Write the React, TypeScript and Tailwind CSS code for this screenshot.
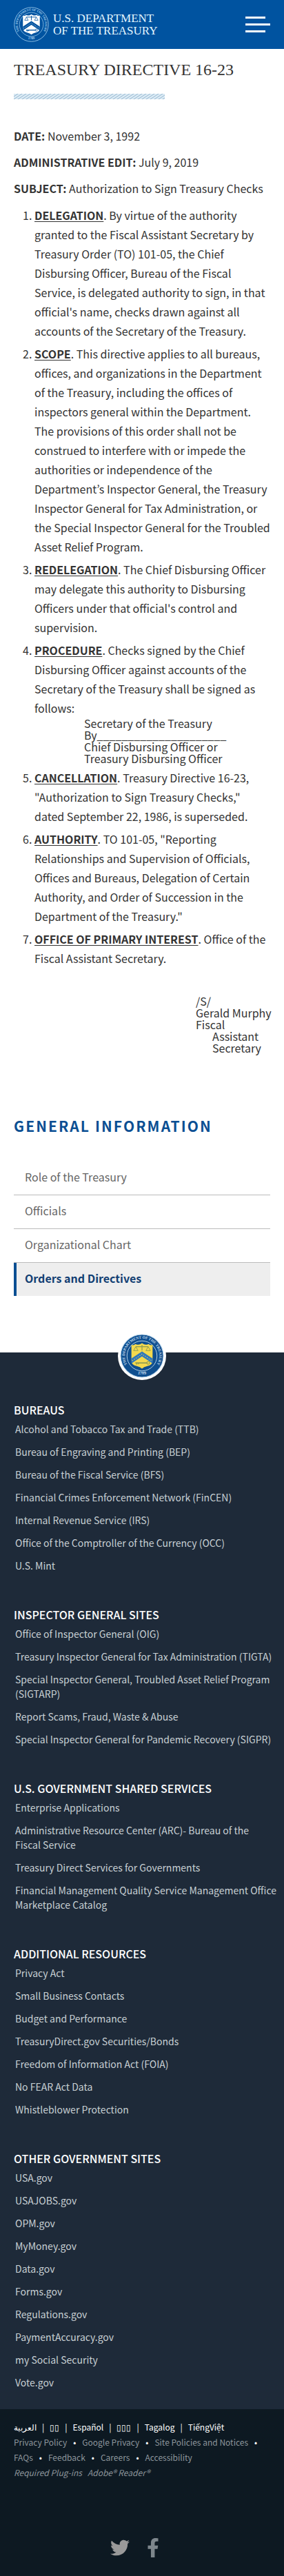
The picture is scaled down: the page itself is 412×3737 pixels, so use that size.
import { FaFacebookF, FaTwitter } from "react-icons/fa";

const sideNav = ["Role of the Treasury", "Officials", "Organizational Chart"];

const footerSections = [
  {
    title: "BUREAUS",
    links: [
      "Alcohol and Tobacco Tax and Trade (TTB)",
      "Bureau of Engraving and Printing (BEP)",
      "Bureau of the Fiscal Service (BFS)",
      "Financial Crimes Enforcement Network (FinCEN)",
      "Internal Revenue Service (IRS)",
      "Office of the Comptroller of the Currency (OCC)",
      "U.S. Mint",
    ],
  },
  {
    title: "INSPECTOR GENERAL SITES",
    links: [
      "Office of Inspector General (OIG)",
      "Treasury Inspector General for Tax Administration (TIGTA)",
      "Special Inspector General, Troubled Asset Relief Program\n(SIGTARP)",
      "Report Scams, Fraud, Waste & Abuse",
      "Special Inspector General for Pandemic Recovery (SIGPR)",
    ],
  },
  {
    title: "U.S. GOVERNMENT SHARED SERVICES",
    links: [
      "Enterprise Applications",
      "Administrative Resource Center (ARC)- Bureau of the\nFiscal Service",
      "Treasury Direct Services for Governments",
      "Financial Management Quality Service Management Office\nMarketplace Catalog",
    ],
  },
  {
    title: "ADDITIONAL RESOURCES",
    links: [
      "Privacy Act",
      "Small Business Contacts",
      "Budget and Performance",
      "TreasuryDirect.gov Securities/Bonds",
      "Freedom of Information Act (FOIA)",
      "No FEAR Act Data",
      "Whistleblower Protection",
    ],
  },
  {
    title: "OTHER GOVERNMENT SITES",
    links: [
      "USA.gov",
      "USAJOBS.gov",
      "OPM.gov",
      "MyMoney.gov",
      "Data.gov",
      "Forms.gov",
      "Regulations.gov",
      "PaymentAccuracy.gov",
      "my Social Security",
      "Vote.gov",
    ],
  },
];

const languages = ["العربية", "▯▯", "Español", "▯▯▯", "Tagalog", "TiếngViệt"];

const policies = [
  "Privacy Policy",
  "Google Privacy",
  "Site Policies and Notices",
  "FAQs",
  "Feedback",
  "Careers",
  "Accessibility",
];

type SealProps = {
  id: string;
  className: string;
  ring: string;
  line: string;
  shield: string;
  chevron: string;
  mark: string;
};

function Seal({ id, className, ring, line, shield, chevron, mark }: SealProps) {
  return (
    <svg viewBox="0 0 100 100" className={className} aria-hidden="true">
      <defs>
        <path id={id + "-top"} d="M 22.5 77.5 A 39 39 0 1 1 77.5 77.5" />
        <path id={id + "-bottom"} d="M 30 87.5 A 44 44 0 0 0 70 87.5" />
      </defs>
      <circle cx="50" cy="50" r="48.5" fill={ring} stroke={line} strokeWidth="1.6" />
      <circle cx="50" cy="50" r="34" fill="none" stroke={line} strokeWidth="1.4" />
      <text fill={line} fontSize="8.6" fontWeight="700" fontFamily="Liberation Serif, serif" textAnchor="middle">
        <textPath href={"#" + id + "-top"} startOffset="50%">
          THE DEPARTMENT OF THE TREASURY
        </textPath>
      </text>
      <text fill={line} fontSize="10" fontWeight="700" fontFamily="Liberation Serif, serif" textAnchor="middle">
        <textPath href={"#" + id + "-bottom"} startOffset="50%">
          1789
        </textPath>
      </text>
      <path
        d="M26 25 Q31 27 35 23 Q42 27 50 21 Q58 27 65 23 Q69 27 74 25 L74 60 Q74 71 62 73 Q54 75 50 79 Q46 75 38 73 Q26 71 26 60 Z"
        fill={shield}
      />
      <path d="M26 56 L50 40 L74 56 L74 67 L50 51 L26 67 Z" fill={chevron} />
      <path d="M28 61 L50 46 L72 61" fill="none" stroke={shield} strokeWidth="1.6" strokeDasharray="2 3" />
      <path d="M50 25 V38 M36 29 H64" fill="none" stroke={mark} strokeWidth="1.8" />
      <path d="M36 29 L31 38 H41 Z M64 29 L59 38 H69 Z" fill="none" stroke={mark} strokeWidth="1.4" />
      <path d="M35 66 H62" stroke={mark} strokeWidth="2.6" />
      <circle cx="64" cy="66" r="3" fill="none" stroke={mark} strokeWidth="1.6" />
      <path d="M38 66 V70 M42 66 V69" stroke={mark} strokeWidth="1.8" />
    </svg>
  );
}

function Term({ children }: { children: string }) {
  return <strong className="font-bold underline decoration-1 underline-offset-2">{children}</strong>;
}

function FooterSection({ title, links }: { title: string; links: string[] }) {
  return (
    <section>
      <h2 className="text-base leading-6 font-medium text-white">{title}</h2>
      <ul className="mt-1.5 -mr-4 space-y-3 pl-0.5">
        {links.map((link) => (
          <li key={link} className="text-sm leading-[21px] whitespace-pre-line text-[#c8d0d4]">
            <a href="#">{link}</a>
          </li>
        ))}
      </ul>
    </section>
  );
}

export default function App() {
  return (
    <div className="bg-white font-['Noto_Sans_CJK_KR','Noto_Sans',sans-serif] text-base text-[#333]">
      <header className="flex h-[71px] items-center justify-between bg-[#0053a0] px-5">
        <a href="#" className="flex items-center gap-1.5">
          <Seal
            id="brand"
            className="size-[51px]"
            ring="#0053a0"
            line="#a9d4f2"
            shield="#ffffff"
            chevron="#0053a0"
            mark="#0053a0"
          />
          <span className="font-['Liberation_Serif',serif] text-[17px] leading-[18px] text-[#e4f6ff]">
            U.S. DEPARTMENT
            <br />
            OF THE TREASURY
          </span>
        </a>
        <button type="button" aria-label="Menu" className="flex w-9 flex-col gap-[7px]">
          <span className="h-[3px] w-[29px] bg-white" />
          <span className="h-[3px] w-9 bg-white" />
          <span className="h-[3px] w-[29px] bg-white" />
        </button>
      </header>

      <main className="px-5">
        <h1 className="pt-3 font-['Liberation_Serif',serif] text-2xl leading-9 whitespace-nowrap">
          TREASURY DIRECTIVE 16-23
        </h1>
        <svg className="mt-[17px] block h-2 w-[219px]" aria-hidden="true">
          <defs>
            <pattern id="stripes" width="6" height="4" patternUnits="userSpaceOnUse">
              <rect width="6" height="4" fill="#dcebf5" />
              <path d="M-1.5 5 L7.5 -1 M-1.5 1 L1.5 -1 M4.5 5 L7.5 3" stroke="#94b6cf" strokeWidth="1" />
            </pattern>
          </defs>
          <rect width="219" height="8" fill="url(#stripes)" />
        </svg>

        <div className="space-y-[10px] pt-[39px] leading-7">
          <p>
            <strong>DATE:</strong> November 3, 1992
          </p>
          <p>
            <strong>ADMINISTRATIVE EDIT:</strong> July 9, 2019
          </p>
          <p>
            <strong>SUBJECT:</strong> Authorization to Sign Treasury Checks
          </p>
        </div>

        <ol className="list-decimal space-y-[5px] pt-[11px] pl-[30px] leading-7">
          <li>
            <Term>DELEGATION</Term>. By virtue of the authority granted to the Fiscal Assistant Secretary by
            Treasury Order (TO) 101-05, the Chief Disbursing Officer, Bureau of the Fiscal Service, is delegated
            authority to sign, in that official's name, checks drawn against all accounts of the Secretary of the
            Treasury.
          </li>
          <li>
            <Term>SCOPE</Term>. This directive applies to all bureaus, offices, and organizations in the Department
            of the Treasury, including the offices of inspectors general within the Department. The provisions of
            this order shall not be construed to interfere with or impede the authorities or independence of the
            Department’s Inspector General, the Treasury Inspector General for Tax Administration, or the Special
            Inspector General for the Troubled Asset Relief Program.
          </li>
          <li>
            <Term>REDELEGATION</Term>. The Chief Disbursing Officer may delegate this authority to Disbursing
            Officers under that official's control and supervision.
          </li>
          <li>
            <Term>PROCEDURE</Term>. Checks signed by the Chief Disbursing Officer against accounts of the Secretary
            of the Treasury shall be signed as follows:
            <p className="pl-[72px] leading-[17px]">
              Secretary of the Treasury
              <br />
              By_____________________
              <br />
              Chief Disbursing Officer or
              <br />
              Treasury Disbursing Officer
            </p>
          </li>
          <li>
            <Term>CANCELLATION</Term>. Treasury Directive 16-23, "Authorization to Sign Treasury Checks," dated
            September 22, 1986, is superseded.
          </li>
          <li>
            <Term>AUTHORITY</Term>. TO 101-05, "Reporting Relationships and Supervision of Officials, Offices and
            Bureaus, Delegation of Certain Authority, and Order of Succession in the Department of the Treasury."
          </li>
          <li>
            <Term>OFFICE OF PRIMARY INTEREST</Term>. Office of the Fiscal Assistant Secretary.
          </li>
        </ol>

        <div className="flex justify-end pt-10 leading-[17px]">
          <p className="w-[108px] whitespace-nowrap">
            /S/
            <br />
            Gerald Murphy
            <br />
            Fiscal
            <span className="block pl-6">
              Assistant
              <br />
              Secretary
            </span>
          </p>
        </div>

        <aside className="pt-[88px] pb-[82px]">
          <h2 className="text-[21px] leading-8 font-bold tracking-widest text-[#0b4f93]">GENERAL INFORMATION</h2>
          <nav className="pt-9">
            {sideNav.map((item) => (
              <a key={item} href="#" className="block border-b border-[#bbb] pt-[10px] pb-[14px] pl-4 leading-6 text-[#666]">
                {item}
              </a>
            ))}
            <a
              href="#"
              className="block border-l-4 border-[#0b4f93] bg-[#eee] pt-[10px] pb-[14px] pl-3 leading-6 font-bold text-[#123f73]"
            >
              Orders and Directives
            </a>
          </nav>
        </aside>
      </main>

      <footer>
        <div className="relative bg-[#1e2a39] px-5 pt-[71px] pb-7">
          <div className="absolute -top-[30px] left-1/2 flex size-[70px] -translate-x-1/2 items-center justify-center rounded-full bg-white">
            <Seal
              id="badge"
              className="size-[64px]"
              ring="#0f4f8f"
              line="#c3dcee"
              shield="#f3d94e"
              chevron="#2f78bd"
              mark="#8a9a52"
            />
          </div>
          <div className="space-y-12">
            {footerSections.map((section) => (
              <FooterSection key={section.title} title={section.title} links={section.links} />
            ))}
          </div>
        </div>

        <div className="bg-[#0d1922] px-5 pt-[15px] pb-[27px] text-xs leading-[22px] text-[#8c959b]">
          <ul className="flex flex-wrap text-white">
            {languages.map((language, index) => (
              <li key={language} className="flex">
                {index > 0 && <span className="px-2">|</span>}
                <a href="#">{language}</a>
              </li>
            ))}
          </ul>
          <ul className="flex flex-wrap">
            {policies.map((policy, index) => (
              <li key={policy} className="flex">
                <a href="#">{policy}</a>
                {index < policies.length - 1 && <span className="px-[9px] text-white">•</span>}
              </li>
            ))}
          </ul>
          <p className="flex gap-2 italic">
            <span>Required Plug-ins</span>
            <a href="#">Adobe® Reader®</a>
          </p>
          <div className="flex justify-center gap-5 pt-[84px] pr-4">
            <a href="#" aria-label="Twitter">
              <FaTwitter className="size-7 text-[#999]" />
            </a>
            <a href="#" aria-label="Facebook">
              <FaFacebookF className="size-7 text-[#7d868c]" />
            </a>
          </div>
        </div>
      </footer>
    </div>
  );
}
